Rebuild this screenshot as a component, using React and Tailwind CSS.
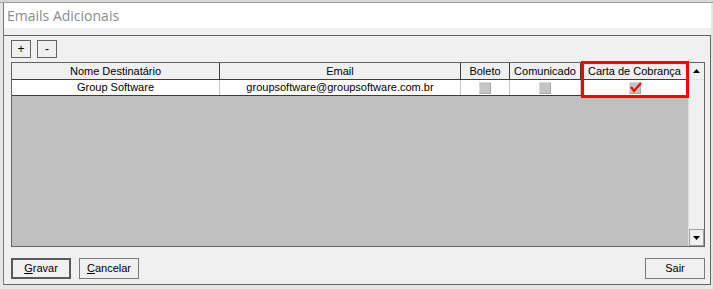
import React from 'react';

const cols = [
  { label: 'Nome Destinatário', w: 'w-[208px]' },
  { label: 'Email', w: 'w-[241px]' },
  { label: 'Boleto', w: 'w-[49px]' },
  { label: 'Comunicado', w: 'w-[71px]' },
  { label: 'Carta de Cobrança', w: 'w-[107px]' },
];

function Check({ checked }) {
  return (
    <span className="relative inline-block w-[12px] h-[12px] bg-[#c4c4c4] border border-[#a9a9a9] border-t-[#dadada] border-l-[#dadada]">
      {checked && (
        <svg className="absolute -top-[2px] left-[0px]" width="13" height="12" viewBox="0 0 13 12">
          <path d="M1 6 L4 10 L11 2" stroke="#ff0000" strokeWidth="2.2" fill="none" />
        </svg>
      )}
    </span>
  );
}

function WinButton({ children, main, className = '' }) {
  return (
    <button
      className={`h-[21px] w-[60px] bg-[#f0f0f0] text-[11px] text-black flex items-center justify-center ${
        main ? 'border-2 border-[#5a5a5a]' : 'border border-[#7a7a7a]'
      } ${className}`}
    >
      {children}
    </button>
  );
}

export default function App() {
  return (
    <div
      className="w-[713px] h-[289px] relative overflow-hidden bg-[#e6e6e6]"
      style={{ fontFamily: '"Liberation Sans", Arial, sans-serif' }}
    >
      {/* backdrop strips */}
      <div className="h-[3px] bg-[#d8d8d8] border-b border-[#a0a0a0]" />

      <div className="ml-[3px] w-[708px] h-[282px] flex flex-col border-l border-[#7a7a7a]">
        {/* title */}
        <div className="h-[25px] bg-white flex items-center pl-[3px]">
          <span className="text-[14px] text-[#8c8c8c]" style={{ fontFamily: '"Open Sans", sans-serif' }}>
            Emails Adicionais
          </span>
        </div>

        <div className="flex-1 bg-[#f0f0f0] pt-[7px] flex flex-col">
          <div className="flex-1 border-t border-r border-b border-[#646464] pl-[7px] pr-[5px] pt-[4px] flex flex-col">
            <div className="flex gap-[6px]">
              <button className="w-[20px] h-[18px] border border-[#646464] bg-[#f0f0f0] text-[12px] leading-none text-black flex items-center justify-center">+</button>
              <button className="w-[20px] h-[18px] border border-[#646464] bg-[#f0f0f0] text-[12px] leading-none text-black flex items-center justify-center">-</button>
            </div>

            {/* grid */}
            <div className="mt-[4px] h-[185px] border border-[#646464] flex">
              <div className="w-[676px] flex flex-col">
                <div className="h-[17px] flex border-b border-[#3c3c3c] bg-[#f0f0f0]">
                  {cols.map((c) => (
                    <div key={c.label} className={`${c.w} h-full border-r border-[#3c3c3c] last:border-r-0 flex items-center justify-center text-[11px] text-black`}>
                      {c.label}
                    </div>
                  ))}
                </div>
                <div className="h-[16px] flex border-b border-[#3c3c3c] bg-white">
                  <div className="w-[208px] border-r border-[#c8c8c8] flex items-center justify-center text-[11px] text-black">Group Software</div>
                  <div className="w-[241px] border-r border-[#c8c8c8] flex items-center justify-center text-[11px] text-black">groupsoftware@groupsoftware.com.br</div>
                  <div className="w-[49px] border-r border-[#c8c8c8] flex items-center justify-center"><Check /></div>
                  <div className="w-[71px] border-r border-[#c8c8c8] flex items-center justify-center"><Check /></div>
                  <div className="w-[107px] flex items-center justify-center"><Check checked /></div>
                </div>
                <div className="flex-1 bg-[#c0c0c0]" />
              </div>
              {/* scrollbar */}
              <div className="w-[17px] flex flex-col bg-[#f0f0f0] border-l border-[#e0e0e0]">
                <div className="h-[17px] flex items-center justify-center border-b border-[#e4e4e4]">
                  <svg width="7" height="4" viewBox="0 0 7 4"><path d="M0 4 L3.5 0 L7 4 Z" fill="#000" /></svg>
                </div>
                <div className="flex-1" />
                <div className="h-[17px] flex items-center justify-center border border-[#a0a0a0]">
                  <svg width="7" height="4" viewBox="0 0 7 4"><path d="M0 0 L7 0 L3.5 4 Z" fill="#000" /></svg>
                </div>
              </div>
            </div>

            <div className="mt-[11px] flex items-start">
              <WinButton main>
                <span><span className="underline">G</span>ravar</span>
              </WinButton>
              <WinButton className="ml-[8px]">
                <span><span className="underline">C</span>ancelar</span>
              </WinButton>
              <div className="flex-1" />
              <WinButton>Sair</WinButton>
            </div>
          </div>
        </div>
      </div>

      {/* highlight box */}
      <div className="absolute left-[581px] top-[61px] w-[108px] h-[37px] border-[3px] border-[#ff0000]" />
    </div>
  );
}
